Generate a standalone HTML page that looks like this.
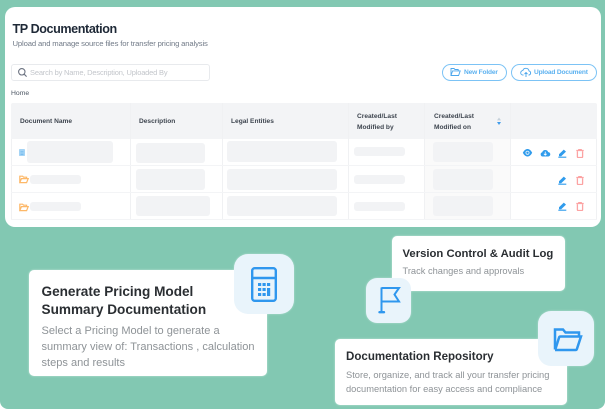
<!DOCTYPE html>
<html><head><meta charset="utf-8">
<style>
html,body{margin:0;padding:0;background:#fff}
#r{position:relative;width:605px;height:409px;overflow:hidden;background:#82c8b2;border-radius:0 0 8px 8px;font-family:"Liberation Sans",sans-serif;filter:blur(.3px)}
#r div,#r svg,#r span{position:absolute}
.t{white-space:nowrap}
.s{background:#f2f3f5;border-radius:3px}
.l{background:#f0f1f3;width:1px}
.h{background:#f3f4f6;height:1px}
.hd{font-size:6.6px;font-weight:bold;color:#3f4650;line-height:11px}
.c{background:#fff;border-radius:5px;box-shadow:0 0 2px rgba(255,255,255,.5)}
.ib{background:#e9f4fb;box-shadow:0 0 2px rgba(255,255,255,.4)}
.ct{color:#2a2e32;font-weight:bold}
.cd{color:#8e9397}
.b{font-size:6.6px;font-weight:bold;color:#5db2f0;letter-spacing:-.18px}
</style></head><body>
<div id="r">
<div style="left:5px;top:7px;width:596px;height:220px;background:#fff;border-radius:10px"></div>
<div class="t" style="left:12.5px;top:21.5px;font-size:12.6px;letter-spacing:-.42px;font-weight:bold;color:#1f2937">TP Documentation</div>
<div class="t" style="left:12.5px;top:39px;font-size:7.7px;letter-spacing:-.15px;color:#727b88">Upload and manage source files for transfer pricing analysis</div>

<div style="left:11px;top:64px;width:197px;height:15px;border:1px solid #e8eaed;border-radius:3px"></div>
<svg style="left:17px;top:67px" width="11" height="11" viewBox="0 0 11 11" fill="none" stroke="#6b7280" stroke-width="1.1"><circle cx="4.8" cy="4.8" r="3.2"/><path d="M7.2 7.2L9.6 9.6"/></svg>
<div class="t" style="left:30px;top:68px;font-size:7.5px;letter-spacing:-.18px;color:#c3c6cb">Search by Name, Description, Uploaded By</div>

<div style="left:442px;top:64px;width:63px;height:15px;border:1px solid #7cc3f5;border-radius:9px"></div>
<svg style="left:450px;top:67px" width="11" height="10" viewBox="0 0 11 10" fill="none" stroke="#4ba6ec" stroke-width=".9"><path d="M1 8.5V1.5h3l1 1h3.2v1.4M1 8.5h7.6l1.6-4.6H2.6z"/></svg>
<div class="t b" style="left:464px;top:68.6px">New Folder</div>
<div style="left:511px;top:64px;width:84px;height:15px;border:1px solid #7cc3f5;border-radius:9px"></div>
<svg style="left:520px;top:66.5px" width="12" height="11" viewBox="0 0 12 11" fill="none" stroke="#4ba6ec" stroke-width=".9"><path d="M3.5 8H3A2.2 2.2 0 0 1 2.8 3.6 3.2 3.2 0 0 1 9 3.9 2.1 2.1 0 0 1 9 8h-.5M6 10V5.5M4.5 7L6 5.5 7.5 7"/></svg>
<div class="t b" style="left:534px;top:68.6px">Upload Document</div>

<div class="t" style="left:11px;top:89.5px;font-size:6.8px;color:#4b5563">Home</div>

<div style="left:11px;top:103px;width:586px;height:36px;background:#f3f4f6;border-radius:2px 2px 0 0"></div>
<div style="left:424px;top:139px;width:86px;height:80px;background:#fafafa"></div>
<div class="l" style="left:130px;top:103px;height:116px"></div>
<div class="l" style="left:222px;top:103px;height:116px"></div>
<div class="l" style="left:348px;top:103px;height:116px"></div>
<div class="l" style="left:424px;top:103px;height:116px"></div>
<div class="l" style="left:510px;top:103px;height:116px"></div>
<div class="l" style="left:11px;top:139px;height:80px"></div>
<div class="l" style="left:596px;top:139px;height:80px"></div>
<div class="h" style="left:11px;top:165px;width:586px"></div>
<div class="h" style="left:11px;top:192px;width:586px"></div>
<div class="h" style="left:11px;top:219px;width:586px"></div>

<div class="t hd" style="left:20px;top:116px">Document Name</div>
<div class="t hd" style="left:139px;top:116px">Description</div>
<div class="t hd" style="left:231px;top:116px">Legal Entities</div>
<div class="t hd" style="left:357px;top:110.5px">Created/Last</div>
<div class="t hd" style="left:357px;top:121.5px">Modified by</div>
<div class="t hd" style="left:434px;top:110.5px">Created/Last</div>
<div class="t hd" style="left:434px;top:121.5px">Modified on</div>
<svg style="left:496px;top:117px" width="6" height="9" viewBox="0 0 6 9"><path d="M3 .5L5 3.4H1z" fill="#c5d0da"/><path d="M3 8L5 5H1z" fill="#3f9bea"/></svg>

<!-- row 1 -->
<svg style="left:19px;top:149px" width="6" height="7" viewBox="0 0 6 7"><rect width="6" height="7" rx=".8" fill="#a5d4f5"/><path d="M1.5 2.5h3M1.5 4h3M1.5 5.4h3" stroke="#62b1ee" stroke-width=".6"/></svg>
<div class="s" style="left:27px;top:141px;width:86px;height:22px"></div>
<div class="s" style="left:135.5px;top:142.5px;width:69px;height:20.5px"></div>
<div class="s" style="left:227px;top:141px;width:110px;height:20.5px"></div>
<div class="s" style="left:354px;top:147px;width:51px;height:9px"></div>
<div class="s" style="left:433px;top:141.5px;width:60px;height:20.5px"></div>
<!-- row 2 -->
<svg style="left:19px;top:175px" width="10" height="9" viewBox="0 0 10 9" fill="none" stroke="#fdb868" stroke-width="1.2"><path d="M.8 7.6V1.2h2.8l1 1h3v1.4M.8 7.6h6.8l1.6-4H2.4z"/></svg>
<div class="s" style="left:30px;top:175px;width:51px;height:9px"></div>
<div class="s" style="left:135.5px;top:169px;width:69px;height:20.5px"></div>
<div class="s" style="left:227px;top:169px;width:110px;height:20.5px"></div>
<div class="s" style="left:354px;top:175px;width:51px;height:9px"></div>
<div class="s" style="left:433px;top:169px;width:60px;height:20.5px"></div>
<!-- row 3 -->
<svg style="left:19px;top:202.5px" width="10" height="9" viewBox="0 0 10 9" fill="none" stroke="#fdb868" stroke-width="1.2"><path d="M.8 7.6V1.2h2.8l1 1h3v1.4M.8 7.6h6.8l1.6-4H2.4z"/></svg>
<div class="s" style="left:30px;top:202px;width:51px;height:8.5px"></div>
<div class="s" style="left:135.5px;top:195.5px;width:74.5px;height:20.5px"></div>
<div class="s" style="left:227px;top:195.5px;width:110px;height:20.5px"></div>
<div class="s" style="left:354px;top:202px;width:51px;height:8.5px"></div>
<div class="s" style="left:433px;top:195.5px;width:60px;height:20.5px"></div>

<!-- actions -->
<svg style="left:522px;top:149px" width="11" height="7.5" viewBox="0 0 11 8"><path d="M.5 4C2 1.2 3.8 0 5.5 0S9 1.2 10.5 4C9 6.8 7.2 8 5.5 8S2 6.8.5 4z" fill="#2f9bec"/><circle cx="5.5" cy="4" r="2.2" fill="#d8ecfb"/><circle cx="5.5" cy="4" r="1.2" fill="#2f9bec"/></svg>
<svg style="left:540px;top:149px" width="10.5" height="8" viewBox="0 0 10 8"><path d="M2.3 7.5A2.2 2.2 0 0 1 2 3.2 3.1 3.1 0 0 1 7.9 3.1 2.2 2.2 0 0 1 7.8 7.5z" fill="#2f9bec"/><path d="M5 2.6V6M3.6 4.8L5 6.2 6.4 4.8" stroke="#fff" stroke-width=".8" fill="none"/></svg>
<svg style="left:558px;top:148.5px" width="9" height="9" viewBox="0 0 9 9"><path d="M1 5.2L5.8.6 8 2.6 3.2 7.2H1z" fill="#2f9bec"/><path d="M.3 8.2h8" stroke="#2f9bec" stroke-width="1.2"/></svg>
<svg style="left:558px;top:175.5px" width="9" height="9" viewBox="0 0 9 9"><path d="M1 5.2L5.8.6 8 2.6 3.2 7.2H1z" fill="#2f9bec"/><path d="M.3 8.2h8" stroke="#2f9bec" stroke-width="1.2"/></svg>
<svg style="left:558px;top:202px" width="9" height="9" viewBox="0 0 9 9"><path d="M1 5.2L5.8.6 8 2.6 3.2 7.2H1z" fill="#2f9bec"/><path d="M.3 8.2h8" stroke="#2f9bec" stroke-width="1.2"/></svg>
<svg style="left:576px;top:148.5px" width="8" height="9" viewBox="0 0 8 9" fill="none" stroke="#fca3a3" stroke-width="1.3"><path d="M1.4 2.2v5.6c0 .4.3.7.7.7h3.8c.4 0 .7-.3.7-.7V2.2M.3 1.5h7.4M2.8 1.2V.5h2.4v.7"/></svg>
<svg style="left:576px;top:175.5px" width="8" height="9" viewBox="0 0 8 9" fill="none" stroke="#fca3a3" stroke-width="1.3"><path d="M1.4 2.2v5.6c0 .4.3.7.7.7h3.8c.4 0 .7-.3.7-.7V2.2M.3 1.5h7.4M2.8 1.2V.5h2.4v.7"/></svg>
<svg style="left:576px;top:202px" width="8" height="9" viewBox="0 0 8 9" fill="none" stroke="#fca3a3" stroke-width="1.3"><path d="M1.4 2.2v5.6c0 .4.3.7.7.7h3.8c.4 0 .7-.3.7-.7V2.2M.3 1.5h7.4M2.8 1.2V.5h2.4v.7"/></svg>

<!-- card 1 -->
<div class="c" style="left:29px;top:269.5px;width:238px;height:106.5px"></div>
<div class="t ct" style="left:41.5px;top:283px;font-size:13.6px;line-height:18px">Generate Pricing Model<br>Summary Documentation</div>
<div class="t cd" style="left:41.5px;top:322.5px;font-size:11.05px;line-height:16px">Select a Pricing Model to generate a<br>summary view of: Transactions , calculation<br>steps and results</div>
<div class="ib" style="left:234px;top:254px;width:60px;height:60px;border-radius:14px"></div>
<svg style="left:251px;top:267px" width="26" height="35" viewBox="0 0 26 35"><rect x="1.2" y="1.2" width="23.6" height="32.6" rx="2.5" fill="none" stroke="#2f97ee" stroke-width="2.4"/><path d="M1 11h24" stroke="#2f97ee" stroke-width="2.4"/><g fill="#2f97ee"><rect x="7" y="16" width="3.2" height="3"/><rect x="11.5" y="16" width="3.2" height="3"/><rect x="16" y="16" width="3.2" height="3"/><rect x="7" y="21" width="3.2" height="3"/><rect x="11.5" y="21" width="3.2" height="3"/><rect x="16" y="21" width="3.2" height="8"/><rect x="7" y="26" width="3.2" height="3"/><rect x="11.5" y="26" width="3.2" height="3"/></g></svg>

<!-- card 2 -->
<div class="c" style="left:392px;top:235.5px;width:173px;height:55px"></div>
<div class="t ct" style="left:402.5px;top:246.6px;font-size:11.3px;line-height:15px">Version Control &amp; Audit Log</div>
<div class="t cd" style="left:402.5px;top:265px;font-size:9.3px;line-height:12px">Track changes and approvals</div>
<div class="ib" style="left:365.5px;top:277.5px;width:45.5px;height:45.5px;border-radius:11px"></div>
<svg style="left:378px;top:286px" width="23" height="28" viewBox="0 0 23 28" fill="none" stroke="#2f97ee" stroke-width="2"><path d="M3.5 1.5V26"/><path d="M3.5 2H21l-4.5 6.5 4.5 7H3.5"/><path d="M1.5 26.2h4.5" stroke-width="2.4" stroke-linecap="round"/></svg>

<!-- card 3 -->
<div class="c" style="left:335px;top:338.5px;width:231.5px;height:66.5px"></div>
<div class="t ct" style="left:346px;top:349.6px;font-size:11.55px;line-height:15px">Documentation Repository</div>
<div class="t cd" style="left:346px;top:367.5px;font-size:9.32px;line-height:14px">Store, organize, and track all your transfer pricing<br>documentation for easy access and compliance</div>
<div class="ib" style="left:538px;top:310.5px;width:56px;height:55.5px;border-radius:13px"></div>
<svg style="left:552.5px;top:327px" width="30" height="25" viewBox="0 0 30 25" fill="none" stroke="#2f97ee" stroke-width="2.5"><path d="M2 22.5V2.5h8l2.5 3h13.5v4"/><path d="M2 23h20.5c.7 0 1.3-.5 1.5-1.2L28 9.5H7.5c-.7 0-1.3.5-1.5 1.2L2.3 22.5"/></svg>
</div>
</body></html>
